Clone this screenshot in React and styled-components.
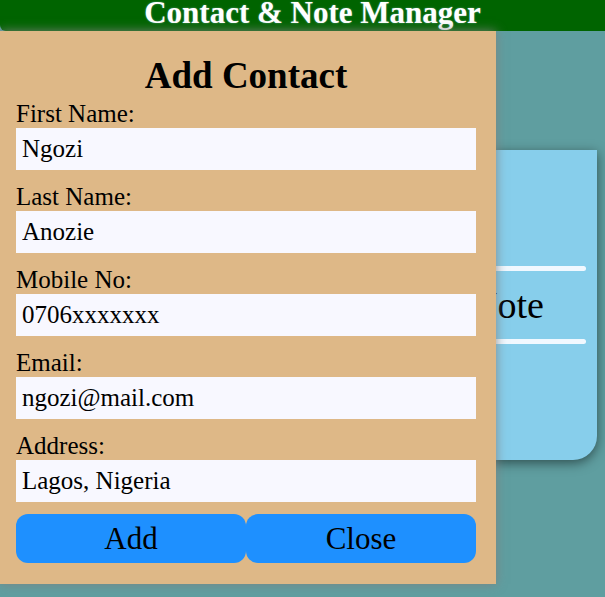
import styled, { createGlobalStyle } from "styled-components"

const Global = createGlobalStyle`
  html, body {
    margin: 0;
    padding: 0;
    background: #5F9EA0;
    font-family: "Liberation Serif", "Times New Roman", serif;
  }
  * { box-sizing: border-box; }
`

const Page = styled.div`
  position: relative;
  width: 100%;
  height: 597px;
  overflow: hidden;
  background: #5F9EA0;
`

const Header = styled.header`
  height: 31px;
  display: flex;
  justify-content: center;
  align-items: flex-start;
  padding-left: 20px;
  background: #006400;
  border-bottom-left-radius: 6px;
`

const AppTitle = styled.h1`
  margin: -3px 0 0;
  color: #fff;
  font-size: 31px;
  font-weight: bold;
  line-height: 31px;
  white-space: nowrap;
  text-shadow: 0 0 2px rgba(150, 200, 220, 0.6);
`

const Main = styled.main`
  display: flex;
  justify-content: flex-end;
  padding: 119px 8px 0 0;
`

const Card = styled.section`
  width: 255px;
  height: 310px;
  display: flex;
  flex-direction: column;
  justify-content: center;
  padding: 0 11px;
  background: #87CEEB;
  border-bottom-right-radius: 24px;
  box-shadow: 0 3px 12px rgba(0, 0, 0, 0.5);
`

const Bar = styled.div`
  height: 5px;
  border-radius: 3px;
  background: #F0F8FF;
`

const CardItem = styled.div`
  height: 68px;
  display: flex;
  align-items: center;
  justify-content: center;
  font-size: 38px;
  color: #000;
`

const Modal = styled.form`
  position: absolute;
  top: 31px;
  left: 0;
  z-index: 2;
  width: 496px;
  display: flex;
  flex-direction: column;
  padding: 24px 20px 21px 16px;
  background: #DEB887;
  box-shadow: 0 0 10px rgba(128, 128, 128, 0.9);
`

const Title = styled.h2`
  margin: 0 0 3px;
  font-size: 37px;
  line-height: 42px;
  text-align: center;
  color: #000;
`

const Field = styled.label`
  display: flex;
  flex-direction: column;
  margin-top: ${p => (p.first ? "0" : "13px")};
  font-family: "Liberation Serif", "Times New Roman", serif;
  font-size: 25px;
  line-height: 28px;
  color: #000;
`

const Input = styled.input`
  height: 42px;
  width: 100%;
  border: none;
  outline: none;
  padding: 0 6px;
  background: #F8F8FF;
  font-family: "Liberation Serif", "Times New Roman", serif;
  font-size: 25px;
  color: #000;
`

const Buttons = styled.div`
  display: grid;
  grid-template-columns: 1fr 1fr;
  margin-top: 12px;
`

const Button = styled.button`
  height: 49px;
  border: none;
  border-radius: 12px;
  background: #1E90FF;
  font-family: "Liberation Serif", "Times New Roman", serif;
  font-size: 31px;
  color: #000;
  cursor: pointer;
`

const fields = [
  ["First Name:", "Ngozi"],
  ["Last Name:", "Anozie"],
  ["Mobile No:", "0706xxxxxxx"],
  ["Email:", "ngozi@mail.com"],
  ["Address:", "Lagos, Nigeria"],
]

function App() {
  return (
    <Page>
      <Global />
      <Header>
        <AppTitle>Contact &amp; Note Manager</AppTitle>
      </Header>
      <Main>
        <Card>
          <Bar />
          <CardItem>Add Note</CardItem>
          <Bar />
        </Card>
      </Main>

      <Modal onSubmit={e => e.preventDefault()}>
        <Title>Add Contact</Title>
        {fields.map(([label, value], i) => (
          <Field key={label} first={i === 0}>
            {label}
            <Input type="text" defaultValue={value} />
          </Field>
        ))}
        <Buttons>
          <Button type="submit">Add</Button>
          <Button type="button">Close</Button>
        </Buttons>
      </Modal>
    </Page>
  )
}

export default App
